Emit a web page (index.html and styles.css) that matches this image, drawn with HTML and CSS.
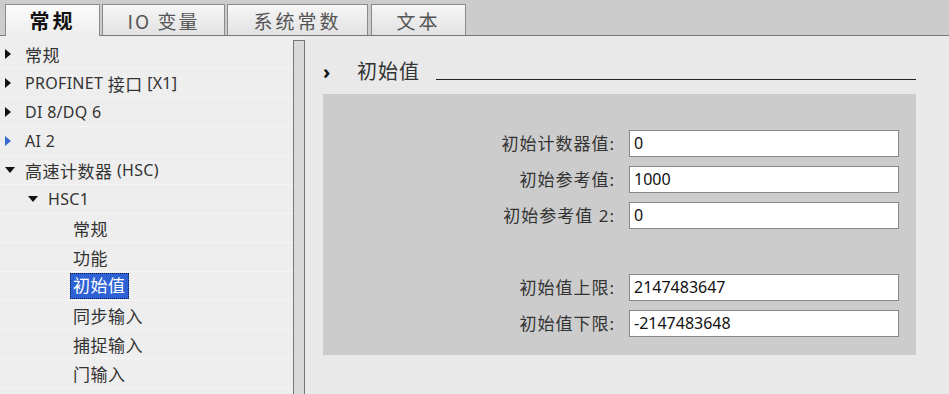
FILE: index.html
```html
<!DOCTYPE html>
<html lang="zh-CN">
<head>
    <meta charset="UTF-8">
    <title>HSC1 初始值</title>
    <link rel="stylesheet" href="styles.css">
</head>
<body>
    <div class="tabbar">
        <div class="tab active tab-general">常规</div>
        <div class="tab tab-io">IO 变量</div>
        <div class="tab tab-const">系统常数</div>
        <div class="tab tab-text">文本</div>
    </div>

    <div class="main">
        <div class="tree">
            <div class="row lvl1"><span class="arrow right"></span><span class="zh">常规</span></div>
            <div class="row lvl1"><span class="arrow right"></span>PROFINET&nbsp;<span class="zh">接口</span>&nbsp;[X1]</div>
            <div class="row lvl1"><span class="arrow right"></span>DI 8/DQ 6</div>
            <div class="row lvl1"><span class="arrow right blue"></span>AI 2</div>
            <div class="row lvl1"><span class="arrow down"></span><span class="zh">高速计数器</span>&nbsp;(HSC)</div>
            <div class="row lvl2"><span class="arrow down"></span>HSC1</div>
            <div class="row lvl3"><span class="zh">常规</span></div>
            <div class="row lvl3"><span class="zh">功能</span></div>
            <div class="row lvl3"><span class="selected zh">初始值</span></div>
            <div class="row lvl3"><span class="zh">同步输入</span></div>
            <div class="row lvl3"><span class="zh">捕捉输入</span></div>
            <div class="row lvl3"><span class="zh">门输入</span></div>
        </div>

        <div class="scrollbar"></div>

        <div class="content">
            <div class="section-head">
                <span class="chevron">›</span>
                <span class="section-title">初始值</span>
                <span class="section-line"></span>
            </div>

            <div class="form-box">
                <div class="form-grid">
                    <label>初始计数器值:</label>
                    <div class="field">0</div>
                    <label>初始参考值:</label>
                    <div class="field">1000</div>
                    <label>初始参考值 2:</label>
                    <div class="field">0</div>
                    <div class="spacer"></div>
                    <label>初始值上限:</label>
                    <div class="field">2147483647</div>
                    <label>初始值下限:</label>
                    <div class="field">-2147483648</div>
                </div>
            </div>
        </div>
    </div>
</body>
</html>
```

FILE: styles.css
```css
* {
    margin: 0;
    padding: 0;
    box-sizing: border-box;
}

body {
    background-color: #eeeeee;
    color: #333333;
    font-family: 'Noto Sans', 'Noto Sans CJK SC', sans-serif;
    font-size: 16px;
    height: 394px;
    overflow: hidden;
}

/* Tabs */
.tabbar {
    height: 36px;
    background-color: #cccccc;
    border-bottom: 1px solid #777777;
    display: flex;
    align-items: flex-end;
    padding-left: 5px;
}

.tab {
    height: 31px;
    border: 1px solid #8a8a8a;
    border-bottom: none;
    background: linear-gradient(#f6f6f6, #e2e2e2);
    color: #555555;
    font-family: 'Noto Sans CJK SC', sans-serif;
    font-size: 19px;
    letter-spacing: 3px;
    display: flex;
    align-items: center;
    justify-content: center;
    margin-right: 3px;
}

.tab.active {
    height: 32px;
    margin-bottom: -1px;
    background: linear-gradient(#fbfbfb, #eeeeee);
    color: #111111;
    font-size: 20px;
    font-weight: bold;
}

.tab-general { width: 95px; }
.tab-io { width: 123px; margin-left: -1px; letter-spacing: 2px; }
.tab-const { width: 141px; margin-left: -1px; }
.tab-text { width: 95px; }

/* Layout */
.main {
    display: flex;
    height: 358px;
}

.tree {
    width: 293px;
    padding-top: 4px;
    background-color: #eeeeee;
}

.row {
    height: 29px;
    border-bottom: 1px solid #f5f5f5;
    display: flex;
    align-items: center;
    white-space: nowrap;
    color: #333333;
    letter-spacing: 0.3px;
}

.zh {
    font-size: 17px;
    letter-spacing: 0.5px;
}

.lvl1 { padding-left: 5px; }
.lvl2 { padding-left: 28px; }
.lvl3 { padding-left: 73px; }

.arrow {
    display: inline-block;
    width: 0;
    height: 0;
}

.arrow.right {
    border-top: 5px solid transparent;
    border-bottom: 5px solid transparent;
    border-left: 6px solid #111111;
    margin-right: 14px;
}

.arrow.right.blue {
    border-left-color: #3768d0;
}

.arrow.down {
    border-left: 5px solid transparent;
    border-right: 5px solid transparent;
    border-top: 6px solid #111111;
    margin-right: 10px;
}

.selected {
    background-color: #2e62d4;
    color: #ffffff;
    border: 1px dotted #0a1a40;
    padding: 0 2px;
    margin-left: -3px;
    line-height: 24px;
}

.scrollbar {
    width: 12px;
    margin-top: 4px;
    background-color: #d9d9d9;
    border: 1px solid #777777;
    border-bottom: none;
}

.content {
    flex: 1;
    background-color: #e9e9e9;
    padding-left: 18px;
    padding-top: 20px;
}

/* Section */
.section-head {
    display: flex;
    align-items: flex-end;
    width: 593px;
    height: 30px;
}

.chevron {
    font-weight: bold;
    font-size: 20px;
    line-height: 28px;
    color: #111111;
    width: 34px;
}

.section-title {
    font-family: 'Noto Sans CJK SC', sans-serif;
    font-size: 20px;
    letter-spacing: 1px;
    color: #333333;
    line-height: 30px;
    margin-right: 16px;
}

.section-line {
    flex: 1;
    border-bottom: 1px solid #222222;
    margin-bottom: 6px;
}

.form-box {
    width: 593px;
    height: 261px;
    margin-top: 8px;
    background-color: #cccccc;
    padding-top: 36px;
}

.form-grid {
    display: grid;
    grid-template-columns: 292px 270px;
    grid-auto-rows: 27px;
    column-gap: 14px;
    row-gap: 9px;
}

.form-grid label {
    text-align: right;
    font-size: 17px;
    line-height: 27px;
    color: #333333;
    letter-spacing: 1px;
}

.spacer {
    grid-column: 1 / 3;
}

.field {
    background-color: #ffffff;
    border: 1px solid #888888;
    padding-left: 4px;
    line-height: 25px;
    color: #111111;
}
```
